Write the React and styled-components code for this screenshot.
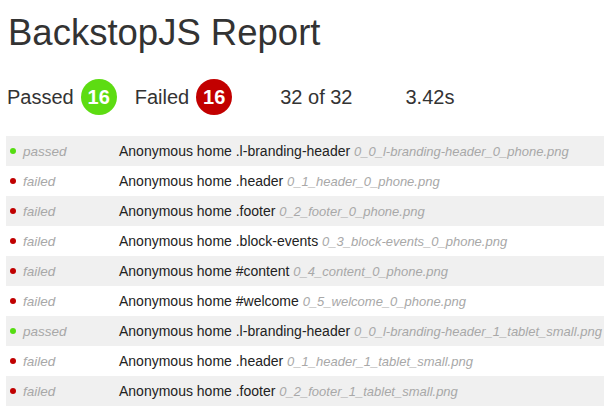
import React from 'react';
import styled, { createGlobalStyle } from 'styled-components';

const GlobalStyle = createGlobalStyle`
  body {
    margin: 0;
    background: #ffffff;
    font-family: "Liberation Sans", Arial, sans-serif;
    color: #333333;
  }
`;

const Page = styled.div`
  padding: 12px 6px 0 6px;
  width: 598px;
`;

const Title = styled.h1`
  margin: 0 0 0 2px;
  font-size: 36.5px;
  font-weight: normal;
  line-height: 42px;
  color: #333;
`;

const Stats = styled.div`
  display: flex;
  align-items: center;
  margin: 25px 0 0 1px;
  height: 36px;
  font-size: 20px;
`;

const Stat = styled.div`
  display: flex;
  align-items: center;
  gap: 7px;
  margin-right: ${({ gap }) => gap}px;
`;

const Badge = styled.span`
  display: inline-flex;
  align-items: center;
  justify-content: center;
  width: 36px;
  height: 36px;
  border-radius: 50%;
  background: ${({ color }) => color};
  color: #fff;
  font-weight: bold;
  font-size: 20px;
`;

const Table = styled.div`
  margin-top: 21px;
  display: flex;
  flex-direction: column;
`;

const Row = styled.div`
  display: grid;
  grid-template-columns: 113px 1fr;
  align-items: center;
  height: 30px;
  background: ${({ odd }) => (odd ? '#f0f0f0' : '#ffffff')};
  font-size: 14px;
  white-space: nowrap;
`;

const Status = styled.div`
  display: flex;
  align-items: center;
  padding-left: 4px;
  font-style: italic;
  font-size: 13.5px;
  color: #a8a8a8;
`;

const Dot = styled.span`
  width: 6px;
  height: 6px;
  border-radius: 50%;
  background: ${({ passed }) => (passed ? '#55dd11' : '#c00000')};
  margin-right: 7px;
`;

const Name = styled.div`
  color: #222;
`;

const File = styled.span`
  font-style: italic;
  font-size: 13px;
  color: #a8a8a8;
`;

const rows = [
  { passed: true, name: 'Anonymous home .l-branding-header', file: '0_0_l-branding-header_0_phone.png' },
  { passed: false, name: 'Anonymous home .header', file: '0_1_header_0_phone.png' },
  { passed: false, name: 'Anonymous home .footer', file: '0_2_footer_0_phone.png' },
  { passed: false, name: 'Anonymous home .block-events', file: '0_3_block-events_0_phone.png' },
  { passed: false, name: 'Anonymous home #content', file: '0_4_content_0_phone.png' },
  { passed: false, name: 'Anonymous home #welcome', file: '0_5_welcome_0_phone.png' },
  { passed: true, name: 'Anonymous home .l-branding-header', file: '0_0_l-branding-header_1_tablet_small.png' },
  { passed: false, name: 'Anonymous home .header', file: '0_1_header_1_tablet_small.png' },
  { passed: false, name: 'Anonymous home .footer', file: '0_2_footer_1_tablet_small.png' },
];

export default function App() {
  return (
    <>
      <GlobalStyle />
      <Page>
        <Title>BackstopJS Report</Title>
        <Stats>
          <Stat gap={18}>Passed <Badge color="#5ddc12">16</Badge></Stat>
          <Stat gap={48}>Failed <Badge color="#c20000">16</Badge></Stat>
          <Stat gap={53}>32 of 32</Stat>
          <Stat gap={0}>3.42s</Stat>
        </Stats>
        <Table>
          {rows.map((r, i) => (
            <Row key={i} odd={i % 2 === 0}>
              <Status>
                <Dot passed={r.passed} />
                {r.passed ? 'passed' : 'failed'}
              </Status>
              <Name>
                {r.name} <File>{r.file}</File>
              </Name>
            </Row>
          ))}
        </Table>
      </Page>
    </>
  );
}
